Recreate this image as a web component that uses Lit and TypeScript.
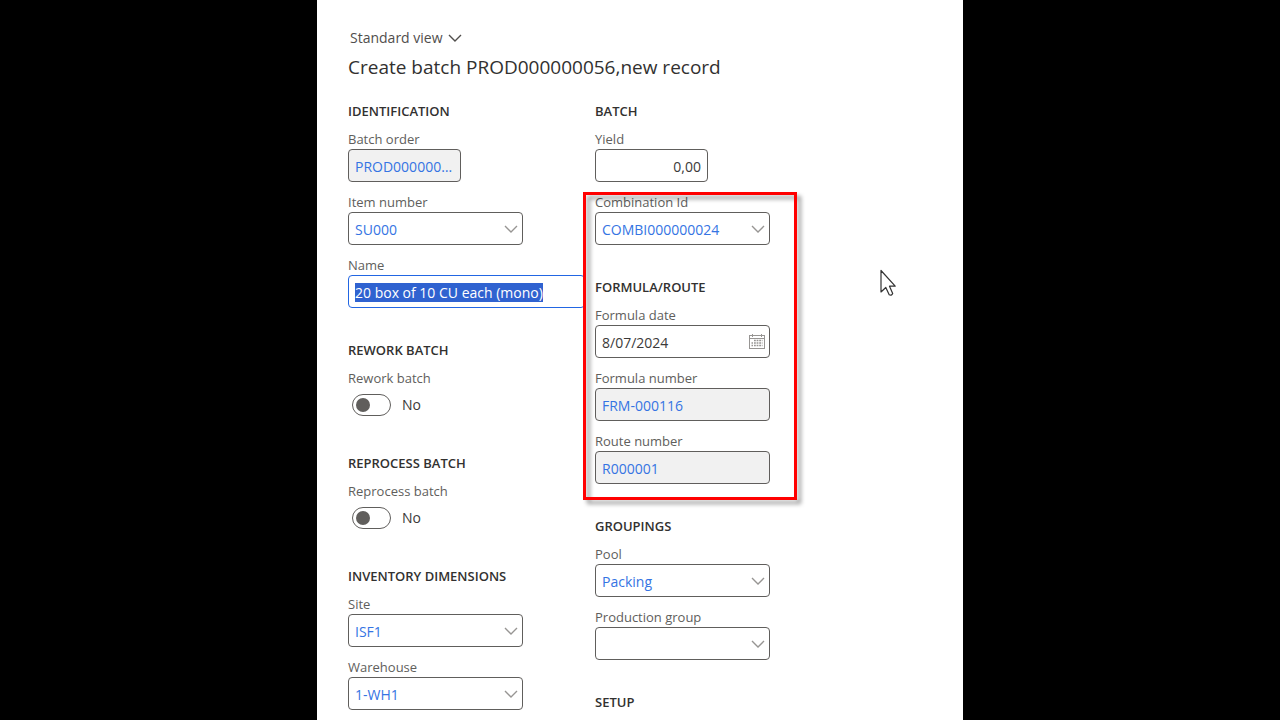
import { LitElement, html, css, svg, nothing } from "lit";
import { customElement, property, query } from "lit/decorators.js";

const chevron = html`<svg class="chevron" width="14" height="8" viewBox="0 0 14 8" aria-hidden="true">
  <path d="M1 1 L7 7 L13 1" fill="none" stroke="currentColor" stroke-width="1.4" />
</svg>`;

const calendar = html`<svg class="calendar" width="16" height="16" viewBox="0 0 16 16" aria-hidden="true">
  <g fill="none" stroke="currentColor" stroke-width="1">
    <rect x="0.5" y="1.5" width="15" height="13" />
    <path d="M0.5 4.5 H15.5 M3.5 0 V3 M12.5 0 V3" />
    ${[6.5, 9, 11.5].map((y) => svg`<path d=${`M5 ${y} H13.5`} stroke-dasharray="1.8 0.8" stroke-width="1.6" />`)}
    <path d="M2.5 9 H4 M2.5 11.5 H4" stroke-width="1.6" />
  </g>
</svg>`;

@customElement("form-field")
class FormField extends LitElement {
  @property() label = "";
  @property() value = "";
  @property() kind: "text" | "select" | "date" | "toggle" = "text";
  @property() size: "short" | "medium" | "long" = "medium";
  @property({ type: Boolean }) locked = false;
  @property({ type: Boolean }) linked = false;
  @property({ type: Boolean }) numeric = false;
  @property({ type: Boolean }) selected = false;
  @query("input") input!: HTMLInputElement;

  static styles = css`
    :host {
      display: block;
      color: #3b3a39;
    }
    label {
      display: block;
      font-size: 13px;
      line-height: 19px;
      color: #605e5c;
      white-space: nowrap;
    }
    .box {
      display: grid;
      align-items: center;
      height: 33px;
    }
    .short { width: 113px; }
    .medium { width: 175px; }
    .long { width: 237px; }
    .control {
      grid-area: 1 / 1;
      box-sizing: border-box;
      width: 100%;
      height: 33px;
      margin: 0;
      padding: 2px 6px 0;
      border: 1px solid #605e5c;
      border-radius: 4px;
      background: #fff;
      color: inherit;
      font: inherit;
      font-size: 14px;
      line-height: 20px;
      appearance: none;
      outline: none;
      text-overflow: ellipsis;
    }
    .control:focus { border-color: #2266e3; }
    .control::selection {
      background: #2f62d0;
      color: #fff;
    }
    .locked { background: #f1f1f1; }
    .linked { color: #3574e3; }
    .numeric { text-align: right; }
    .chevron, .calendar {
      grid-area: 1 / 1;
      justify-self: end;
      margin-right: 5px;
      color: #979593;
      pointer-events: none;
    }
    .toggle {
      display: flex;
      align-items: center;
      gap: 11px;
      height: 33px;
      padding-left: 4px;
      font-size: 14px;
    }
    .switch {
      appearance: none;
      display: flex;
      align-items: center;
      box-sizing: border-box;
      width: 39px;
      height: 22px;
      margin: 0;
      padding: 0 3px;
      border: 1px solid #605e5c;
      border-radius: 11px;
    }
    .switch::before {
      content: "";
      width: 14px;
      height: 14px;
      border-radius: 50%;
      background: #605e5c;
    }
    .switch:checked { justify-content: flex-end; }
  `;

  firstUpdated() {
    if (this.selected) {
      this.input.focus();
      this.input.select();
    }
  }

  render() {
    const look = `control${this.locked ? " locked" : ""}${this.linked ? " linked" : ""}${this.numeric ? " numeric" : ""}`;
    if (this.kind === "toggle") {
      return html`<label for="control">${this.label}</label>
        <div class="toggle">
          <input id="control" class="switch" type="checkbox" role="switch" />
          <span>${this.value}</span>
        </div>`;
    }
    return html`<label for="control">${this.label}</label>
      <div class="box ${this.size}">
        ${this.kind === "select"
          ? html`<select id="control" class=${look}><option>${this.value}</option></select>${chevron}`
          : html`<input id="control" class=${look} type="text" .value=${this.value} ?readonly=${this.locked} />`}
        ${this.kind === "date" ? calendar : nothing}
      </div>`;
  }
}

@customElement("app-root")
class AppRoot extends LitElement {
  static styles = css`
    :host {
      display: block;
      height: 100vh;
      overflow: hidden;
      background: #000;
      font-family: "Open Sans", "Noto Sans", sans-serif;
    }
    .panel {
      position: relative;
      box-sizing: border-box;
      width: 100%;
      max-width: 646px;
      min-height: 100%;
      margin: 0 auto;
      padding: 28px 31px 0;
      background: #fff;
      color: #323130;
    }
    .view {
      display: flex;
      align-items: center;
      gap: 5px;
      padding: 0 2px;
      border: 0;
      background: none;
      color: #504e4c;
      font: inherit;
      font-size: 14px;
      line-height: 20px;
    }
    h1 {
      margin: 6px 0 22px;
      font-size: 19px;
      font-weight: 400;
      line-height: 26px;
    }
    .columns {
      display: grid;
      grid-template-columns: 247px 1fr;
    }
    .column {
      display: flex;
      flex-direction: column;
      gap: 33px;
    }
    section, .marked {
      display: flex;
      flex-direction: column;
      gap: 11px;
    }
    h2 {
      margin: 0 0 -1px;
      font-size: 13px;
      font-weight: 600;
      line-height: 18px;
      white-space: nowrap;
    }
    .marked {
      position: relative;
      width: 190px;
      gap: 33px;
    }
    .frame {
      position: absolute;
      inset: -1px -12px -16px;
      border: 3px solid #f00;
      filter: drop-shadow(4px 4px 2px rgba(0, 0, 0, 0.4));
      pointer-events: none;
    }
    .pointer {
      position: absolute;
      left: 563px;
      top: 269px;
    }
  `;

  render() {
    return html`<main class="panel">
      <button class="view" type="button">Standard view ${chevron}</button>
      <h1>Create batch PROD000000056,new record</h1>
      <form class="columns">
        <div class="column">
          <section>
            <h2>IDENTIFICATION</h2>
            <form-field label="Batch order" value="PROD000000056" size="short" locked linked></form-field>
            <form-field label="Item number" value="SU000" kind="select" linked></form-field>
            <form-field label="Name" value="20 box of 10 CU each (mono)" size="long" selected></form-field>
          </section>
          <section>
            <h2>REWORK BATCH</h2>
            <form-field label="Rework batch" value="No" kind="toggle"></form-field>
          </section>
          <section>
            <h2>REPROCESS BATCH</h2>
            <form-field label="Reprocess batch" value="No" kind="toggle"></form-field>
          </section>
          <section>
            <h2>INVENTORY DIMENSIONS</h2>
            <form-field label="Site" value="ISF1" kind="select" linked></form-field>
            <form-field label="Warehouse" value="1-WH1" kind="select" linked></form-field>
          </section>
        </div>
        <div class="column">
          <section>
            <h2>BATCH</h2>
            <form-field label="Yield" value="0,00" size="short" numeric></form-field>
            <div class="marked">
              <form-field label="Combination Id" value="COMBI000000024" kind="select" linked></form-field>
              <section>
                <h2>FORMULA/ROUTE</h2>
                <form-field label="Formula date" value="8/07/2024" kind="date"></form-field>
                <form-field label="Formula number" value="FRM-000116" locked linked></form-field>
                <form-field label="Route number" value="R000001" locked linked></form-field>
              </section>
              <div class="frame"></div>
            </div>
          </section>
          <section>
            <h2>GROUPINGS</h2>
            <form-field label="Pool" value="Packing" kind="select" linked></form-field>
            <form-field label="Production group" value="" kind="select" linked></form-field>
          </section>
          <section>
            <h2>SETUP</h2>
          </section>
        </div>
      </form>
      <svg class="pointer" width="17" height="28" viewBox="0 0 17 28" aria-hidden="true">
        <path d="M1 1.5 V23 L5.8 18.5 L9.2 25.8 Q11.5 27 12.7 24.5 L9.5 17.2 H15.2 Z" fill="#fff" stroke="#333" stroke-width="1.2" stroke-linejoin="round" />
      </svg>
    </main>`;
  }
}
